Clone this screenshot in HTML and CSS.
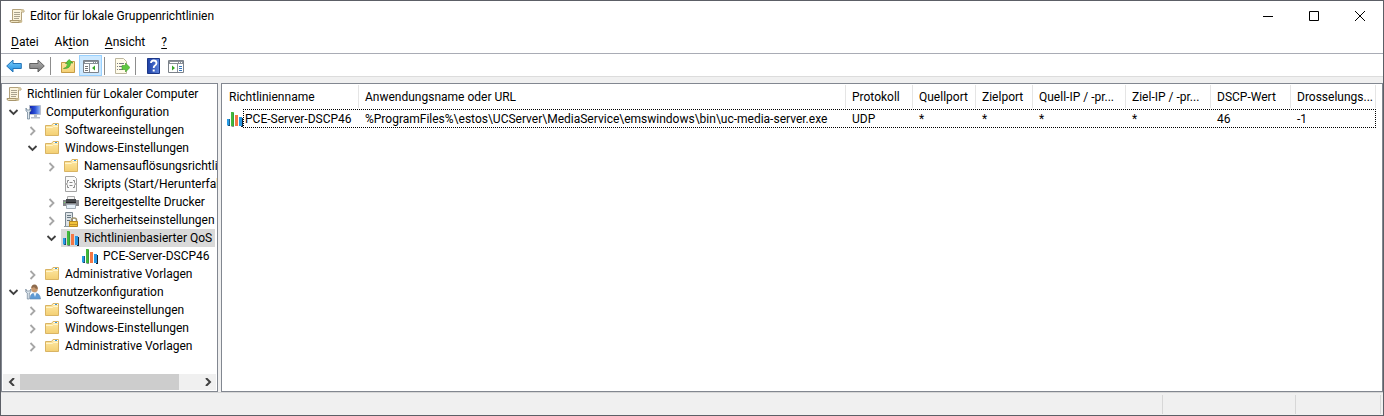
FILE: index.html
```html
<!DOCTYPE html>
<html lang="de">
<head>
  <meta charset="UTF-8">
  <title>Editor für lokale Gruppenrichtlinien</title>
  <link rel="stylesheet" href="styles.css">
</head>
<body>

<!-- icon set -->
<svg class="sprite" aria-hidden="true">
  <linearGradient id="gFolder" x1="0" y1="0" x2="0" y2="1"><stop offset="0" stop-color="#ffe9a6"/><stop offset="1" stop-color="#f3cf72"/></linearGradient>
  <linearGradient id="gBlue" x1="0" y1="0" x2="0" y2="1"><stop offset="0" stop-color="#7fd0fb"/><stop offset="1" stop-color="#1c8be0"/></linearGradient>
  <linearGradient id="gGray" x1="0" y1="0" x2="0" y2="1"><stop offset="0" stop-color="#b5b5b5"/><stop offset="1" stop-color="#757575"/></linearGradient>
  <linearGradient id="gHelp" x1="0" y1="0" x2="1" y2="0"><stop offset="0" stop-color="#1d3fa6"/><stop offset="1" stop-color="#5c83dc"/></linearGradient>
  <linearGradient id="gScreen" x1="0" y1="0" x2="1" y2="0"><stop offset="0" stop-color="#0f1fa8"/><stop offset=".5" stop-color="#2a50d8"/><stop offset="1" stop-color="#9cc0f8"/></linearGradient>
  <symbol id="scroll" viewBox="0 0 16 16">
    <path d="M3.500 1.500h10q1.500 0 1.500 1.500v1h-2.500v8.500h-9z" fill="#fbf3dc" stroke="#b3a27c"/>
    <path d="M12 1.500h1.500q1.500 0 1.500 2h-3z" fill="#d8c9a0"/>
    <path d="M1 12.500h9q0 2 1 2H2.500Q1 14.500 1 12.500z" fill="#efe3c0" stroke="#a8966d"/>
    <path d="M10 12.500h3.500q0 2.500-2 2.500T10 12.500z" fill="#cbbb91"/>
    <path d="M5 4.500h6M5 6.500h6M5 8.500h6M5 10.500h5" stroke="#a9a28e"/>
  </symbol>
  <symbol id="folder" viewBox="0 0 16 16">
    <path d="M1.500 3.500h6l1.500-2h5.500v12h-13z" fill="url(#gFolder)" stroke="#d9b464"/>
    <path d="M9.500 2.500h4.500" stroke="#fff"/>
    <path d="M11 2.500h2" stroke="#3e97d8"/>
    <path d="M2 5.500h6.500l1-1h4.500" stroke="#fff4cb" fill="none"/>
  </symbol>
  <symbol id="computer" viewBox="0 0 16 16">
    <path d="M4.500 1.500h11v9h-11z" fill="url(#gScreen)" stroke="#b9bfcc"/>
    <path d="M9 11h3v2H9zM6 13h9v1.500H6z" fill="#b9bfc8"/>
    <path d="M1 4v3l1.500 1v7h2V8L6 7V4L5 6H2z" fill="#dfe8ef" stroke="#63798c" stroke-width=".7"/>
  </symbol>
  <symbol id="user" viewBox="0 0 16 16">
    <path d="M5 15q0-6 5-6t5.500 6z" fill="#5f9bd5" stroke="#5b87b3" stroke-width=".6"/>
    <path d="M8.500 9h3l-1.500 4z" fill="#e9f2fa"/>
    <circle cx="9.500" cy="5" r="3.300" fill="#c99a70"/>
    <path d="M6.300 4q0-3.500 3.200-3.500T12.700 5q-2.700 0-3.700-2-1 1-2.700 1z" fill="#8d6a4c"/>
    <path d="M.8 5v3l1.500 1v6h2V9l1.500-1V5l-1 2h-3z" fill="#dfe8ef" stroke="#6f8295" stroke-width=".7"/>
  </symbol>
  <symbol id="script" viewBox="0 0 16 16">
    <path d="M2.500.5h9l2 2v13h-11z" fill="#fafafa" stroke="#a3a3a3"/>
    <path d="M6 4.500H4.500v2L3.500 8l1 1.500v2H6M10 4.500h1.500v2l1 1.500-1 1.500v2H10M6.500 6.500h3M6.500 9.500h3" fill="none" stroke="#8a8a8a"/>
  </symbol>
  <symbol id="printer" viewBox="0 0 16 16">
    <path d="M4.500 2.500h7v4h-7z" fill="#f5f5f5" stroke="#aaa"/>
    <path d="M0 6h3V5h10v1h3v6H0z" fill="#85878b"/>
    <path d="M3 5h10v3H3z" fill="#45484c"/>
    <path d="M3 8h10v1H3z" fill="#25272a"/>
    <path d="M3.500 10.500h9v4h-9z" fill="#e6f0f8" stroke="#a3adb6"/>
    <path d="M1 8.500h1" stroke="#6fdc64"/>
  </symbol>
  <symbol id="security" viewBox="0 0 16 16">
    <path d="M2.500.5h7v14h-7z" fill="#dce2e6" stroke="#7a8790"/>
    <path d="M4 3.500h4M4 5.500h4M4 8.500h3" stroke="#687983"/>
    <path d="M1 14.500h9" stroke="#8b999f"/>
    <path d="M8.500 10V8q0-2 2.500-2t2.500 2v2" fill="none" stroke="#a09470" stroke-width="1.500"/>
    <path d="M6.500 9.500h8v5h-8z" fill="#f1c33b" stroke="#b98a20"/>
    <path d="M7 12.500h7" stroke="#c4942a"/>
  </symbol>
  <symbol id="bars" viewBox="0 0 16 16">
    <path d="M2 8h1v7H1v-1h1zM6 2h1v13.500H4.500V14H6zM10 5h1v10H9v-1h1zM15 7h1v9h-2v-1h1z" fill="#142334"/>
    <path d="M0 8h2.500v6.500H0z" fill="#259be6"/>
    <path d="M4 1h2.800v14H4z" fill="#41b93c"/>
    <path d="M8 4h3v11H8z" fill="#f47745"/>
    <path d="M12 6h3v9h-3z" fill="#2697e4"/>
  </symbol>
  <symbol id="back" viewBox="0 0 16 16">
    <path d="M.7 8 7 2v3.500h8.300v5H7V14z" fill="url(#gBlue)" stroke="#2474b7"/>
  </symbol>
  <symbol id="forward" viewBox="0 0 16 16">
    <path d="M15.300 8 9 2v3.500H.7v5H9V14z" fill="url(#gGray)" stroke="#626262"/>
  </symbol>
  <symbol id="up" viewBox="0 0 16 16">
    <path d="M1.500 4.500h5l1-1h7v11h-13z" fill="url(#gFolder)" stroke="#c59b45"/>
    <path d="M3.500 10.500q4-.5 4-5H5.500l3.500-4 4 3.500h-2.500q0 6-7 5.500z" fill="#55c83a" stroke="#349325" stroke-width=".6"/>
  </symbol>
  <symbol id="tree-pane" viewBox="0 0 16 16">
    <path d="M.5 2.500h15v12H.5z" fill="#fff" stroke="#7c828a"/>
    <path d="M1 3h14v3H1z" fill="#8a9098"/>
    <path d="M2 4.500h8M11 4.500h1M13 4.500h1" stroke="#fff"/>
    <path d="M6.500 6v8" stroke="#8a9098"/>
    <path d="M2 8.500h3M2 10.500h3M2 12.500h3" stroke="#777"/>
    <path d="M12 7.500v5L9 10z" fill="#36a526"/>
  </symbol>
  <symbol id="export" viewBox="0 0 16 16">
    <path d="M1.500.5h8l3 3v12h-11z" fill="#fffbe9" stroke="#bcb69e"/>
    <path d="M3 5.500h1M5 5.500h5M3 8.500h1M5 8.500h4M3 11.500h1M5 11.500h4" stroke="#777b82"/>
    <path d="M8 7.500h3.500V5l4.500 4.500-4.500 4.500v-2.500H8z" fill="#5dc83f" stroke="#439a2c" stroke-width=".6"/>
  </symbol>
  <symbol id="help" viewBox="0 0 16 16">
    <path d="M2.500.5h12v15h-12z" fill="url(#gHelp)" stroke="#1c3787"/>
    <path d="M6 5q0-2.500 2.700-2.500T11.500 5q0 1.500-1.500 2.500Q8.700 8.300 8.700 10" fill="none" stroke="#fff" stroke-width="1.800"/>
    <path d="M7.700 11.500h2v2h-2z" fill="#fff"/>
  </symbol>
  <symbol id="action-pane" viewBox="0 0 16 16">
    <path d="M.5 2.500h15v12H.5z" fill="#fff" stroke="#7c828a"/>
    <path d="M1 3h14v3H1z" fill="#8a9098"/>
    <path d="M2 4.500h8M11 4.500h1M13 4.500h1" stroke="#fff"/>
    <path d="M9.500 6v8" stroke="#8a9098"/>
    <path d="M11 8.500h3M11 10.500h3M11 12.500h3" stroke="#3978bd"/>
    <path d="M4 7.500v5L7 10z" fill="#36a526"/>
  </symbol>
  <symbol id="closed" viewBox="0 0 16 16">
    <path d="m6.500 6 4 4-4 4" fill="none" stroke="#a6a6a6" stroke-width="1.800"/>
  </symbol>
  <symbol id="open" viewBox="0 0 16 16">
    <path d="m4.500 7 4 4 4-4" fill="none" stroke="#404040" stroke-width="1.800"/>
  </symbol>
</svg>

<div class="window">
  <header class="titlebar">
    <svg class="icon"><use href="#scroll"/></svg>
    <span class="title">Editor für lokale Gruppenrichtlinien</span>
    <button class="win-btn" aria-label="Minimieren"><svg width="10" height="10"><path d="M0 5.500h10" stroke="#000"/></svg></button>
    <button class="win-btn" aria-label="Maximieren"><svg width="10" height="10"><path d="M.5.5h9v9h-9z" fill="none" stroke="#000"/></svg></button>
    <button class="win-btn" aria-label="Schließen"><svg width="10" height="10"><path d="m0 0 10 10M10 0 0 10" stroke="#000"/></svg></button>
  </header>

  <nav class="menubar">
    <button><u>D</u>atei</button>
    <button>Ak<u>t</u>ion</button>
    <button><u>A</u>nsicht</button>
    <button><u>?</u></button>
  </nav>

  <div class="toolbar">
    <button aria-label="Zurück"><svg class="icon"><use href="#back"/></svg></button>
    <button aria-label="Vorwärts"><svg class="icon"><use href="#forward"/></svg></button>
    <span class="sep"></span>
    <button aria-label="Eine Ebene nach oben"><svg class="icon"><use href="#up"/></svg></button>
    <button class="active" aria-label="Konsolenstruktur"><svg class="icon"><use href="#tree-pane"/></svg></button>
    <span class="sep"></span>
    <button aria-label="Liste exportieren"><svg class="icon"><use href="#export"/></svg></button>
    <span class="sep"></span>
    <button aria-label="Hilfe"><svg class="icon"><use href="#help"/></svg></button>
    <button aria-label="Aktionsbereich"><svg class="icon"><use href="#action-pane"/></svg></button>
  </div>

  <main class="panes">
    <aside class="tree-pane">
      <div class="tree">
        <div class="node root"><span class="label"><svg class="icon"><use href="#scroll"/></svg>Richtlinien für Lokaler Computer</span></div>
        <ul>
          <li>
            <div class="node"><button class="toggle" aria-label="Reduzieren"><svg class="icon"><use href="#open"/></svg></button><span class="label"><svg class="icon"><use href="#computer"/></svg>Computerkonfiguration</span></div>
            <ul>
              <li><div class="node"><button class="toggle" aria-label="Erweitern"><svg class="icon"><use href="#closed"/></svg></button><span class="label"><svg class="icon"><use href="#folder"/></svg>Softwareeinstellungen</span></div></li>
              <li>
                <div class="node"><button class="toggle" aria-label="Reduzieren"><svg class="icon"><use href="#open"/></svg></button><span class="label"><svg class="icon"><use href="#folder"/></svg>Windows-Einstellungen</span></div>
                <ul>
                  <li><div class="node"><button class="toggle" aria-label="Erweitern"><svg class="icon"><use href="#closed"/></svg></button><span class="label"><svg class="icon"><use href="#folder"/></svg>Namensauflösungsrichtli</span></div></li>
                  <li><div class="node"><span class="toggle"></span><span class="label"><svg class="icon"><use href="#script"/></svg>Skripts (Start/Herunterfah</span></div></li>
                  <li><div class="node"><button class="toggle" aria-label="Erweitern"><svg class="icon"><use href="#closed"/></svg></button><span class="label"><svg class="icon"><use href="#printer"/></svg>Bereitgestellte Drucker</span></div></li>
                  <li><div class="node"><button class="toggle" aria-label="Erweitern"><svg class="icon"><use href="#closed"/></svg></button><span class="label"><svg class="icon"><use href="#security"/></svg>Sicherheitseinstellungen</span></div></li>
                  <li>
                    <div class="node"><button class="toggle" aria-label="Reduzieren"><svg class="icon"><use href="#open"/></svg></button><span class="label selected"><svg class="icon"><use href="#bars"/></svg>Richtlinienbasierter QoS</span></div>
                    <ul>
                      <li><div class="node"><span class="toggle"></span><span class="label"><svg class="icon"><use href="#bars"/></svg>PCE-Server-DSCP46</span></div></li>
                    </ul>
                  </li>
                </ul>
              </li>
              <li><div class="node"><button class="toggle" aria-label="Erweitern"><svg class="icon"><use href="#closed"/></svg></button><span class="label"><svg class="icon"><use href="#folder"/></svg>Administrative Vorlagen</span></div></li>
            </ul>
          </li>
          <li>
            <div class="node"><button class="toggle" aria-label="Reduzieren"><svg class="icon"><use href="#open"/></svg></button><span class="label"><svg class="icon"><use href="#user"/></svg>Benutzerkonfiguration</span></div>
            <ul>
              <li><div class="node"><button class="toggle" aria-label="Erweitern"><svg class="icon"><use href="#closed"/></svg></button><span class="label"><svg class="icon"><use href="#folder"/></svg>Softwareeinstellungen</span></div></li>
              <li><div class="node"><button class="toggle" aria-label="Erweitern"><svg class="icon"><use href="#closed"/></svg></button><span class="label"><svg class="icon"><use href="#folder"/></svg>Windows-Einstellungen</span></div></li>
              <li><div class="node"><button class="toggle" aria-label="Erweitern"><svg class="icon"><use href="#closed"/></svg></button><span class="label"><svg class="icon"><use href="#folder"/></svg>Administrative Vorlagen</span></div></li>
            </ul>
          </li>
        </ul>
      </div>
      <div class="scrollbar">
        <button aria-label="Nach links"><svg width="8" height="8"><path d="M6 0 2 4l4 4" fill="none" stroke="#404040" stroke-width="2"/></svg></button>
        <div class="track"><div class="thumb"></div></div>
        <button aria-label="Nach rechts"><svg width="8" height="8"><path d="m2 0 4 4-4 4" fill="none" stroke="#404040" stroke-width="2"/></svg></button>
      </div>
    </aside>

    <section class="list-pane">
      <table class="list">
        <colgroup>
          <col class="c-name"><col class="c-app"><col class="c-proto"><col class="c-sport"><col class="c-dport"><col class="c-sip"><col class="c-dip"><col class="c-dscp"><col class="c-rate">
        </colgroup>
        <thead>
          <tr>
            <th>Richtlinienname</th>
            <th>Anwendungsname oder URL</th>
            <th>Protokoll</th>
            <th>Quellport</th>
            <th>Zielport</th>
            <th>Quell-IP / -pr...</th>
            <th>Ziel-IP / -pr...</th>
            <th>DSCP-Wert</th>
            <th>Drosselungs...</th>
          </tr>
        </thead>
        <tbody>
          <tr>
            <td><span class="name"><svg class="icon"><use href="#bars"/></svg>PCE-Server-DSCP46</span></td>
            <td>%ProgramFiles%\estos\UCServer\MediaService\emswindows\bin\uc-media-server.exe</td>
            <td>UDP</td>
            <td>*</td>
            <td>*</td>
            <td>*</td>
            <td>*</td>
            <td>46</td>
            <td>-1</td>
          </tr>
        </tbody>
      </table>
    </section>
  </main>

  <footer class="statusbar">
    <div class="cell grow"></div>
    <div class="cell medium"></div>
    <div class="cell small"></div>
  </footer>
</div>

</body>
</html>
```
FILE: styles.css
```css
* { box-sizing: border-box; }
body {
  margin: 0;
  font-family: Roboto, "Open Sans", sans-serif;
  font-size: 12px;
  line-height: 18px;
  color: #000;
}
button {
  font: inherit;
  color: inherit;
  background: none;
  border: none;
  padding: 0;
}
.sprite {
  position: absolute;
  width: 0;
  height: 0;
}
.icon {
  width: 16px;
  height: 16px;
  flex: none;
}
.window {
  display: flex;
  flex-direction: column;
  min-height: 100vh;
  border: 1px solid #5c5f66;
  background-color: #f0f0f0;
}

/* title and menu */
.titlebar {
  display: flex;
  align-items: center;
  height: 29px;
  padding-left: 8px;
  background-color: #fff;
}
.title {
  flex: 1;
  padding-left: 5px;
}
.win-btn {
  width: 46px;
  height: 29px;
  display: flex;
  align-items: center;
  justify-content: center;
}
.menubar {
  display: flex;
  gap: 16px;
  height: 24px;
  padding: 1px 10px 0;
  border-bottom: 1px solid #a9acb5;
  background-color: #fff;
}
.menubar u {
  text-underline-offset: 2px;
}

/* toolbar */
.toolbar {
  display: flex;
  align-items: center;
  height: 23px;
  padding: 1px 0 0 1px;
  border-bottom: 1px solid #dcdcdc;
  background-color: #fff;
}
.toolbar button {
  display: flex;
  align-items: center;
  justify-content: center;
  width: 23px;
  height: 21px;
}
.toolbar .active {
  background-color: #cce8ff;
  border: 1px solid #99d1ff;
}
.sep {
  width: 1px;
  height: 18px;
  margin: 0 5px 0 2px;
  background-color: #8d8d8d;
}

/* panes */
.panes {
  flex: 1;
  display: flex;
  gap: 3px;
  padding-top: 6px;
}
.tree-pane {
  display: flex;
  flex-direction: column;
  width: 217px;
  border: 1px solid #828790;
  background-color: #fff;
}
.tree {
  flex: 1;
  overflow: hidden;
  padding: 1px 0 0 2px;
}
.tree ul {
  list-style: none;
  margin: 0;
  padding: 0;
}
.tree ul ul {
  padding-left: 19px;
}
.node {
  display: flex;
  height: 18px;
  white-space: nowrap;
}
.toggle {
  width: 16px;
  height: 18px;
  margin: 0 2px 0 1px;
  flex: none;
}
.label {
  display: flex;
  align-items: center;
  gap: 5px;
  padding: 0 3px 0 2px;
}
.selected {
  background-color: #d9d9d9;
}
.scrollbar {
  display: flex;
  height: 17px;
  margin: 0 1px;
  border-bottom: 1px solid #fff;
  background-color: #f0f0f0;
}
.scrollbar button {
  display: flex;
  align-items: center;
  justify-content: center;
  width: 17px;
}
.track {
  flex: 1;
}
.thumb {
  width: 89%;
  height: 100%;
  background-color: #cdcdcd;
}

/* list */
.list-pane {
  flex: 1;
  min-width: 0;
  overflow: hidden;
  border: 1px solid #828790;
  background-color: #fff;
}
.list {
  table-layout: fixed;
  width: 1154px;
  border-collapse: separate;
  border-spacing: 0;
}
.c-name { width: 137px; }
.c-app { width: 487px; }
.c-proto { width: 67px; }
.c-sport { width: 63px; }
.c-dport { width: 57px; }
.c-sip { width: 93px; }
.c-dip { width: 85px; }
.c-dscp { width: 80px; }
.c-rate { width: 85px; }
.list th,
.list td {
  padding: 0 0 0 6px;
  text-align: left;
  font-weight: normal;
  white-space: nowrap;
}
.list th {
  height: 25px;
  background: linear-gradient(#e5e5e5, #e5e5e5) right 1px / 1px 23px no-repeat;
}
.list td {
  height: 19px;
}
.list th:first-child {
  padding-left: 7px;
}
.list td:first-child {
  padding-left: 5px;
}
.name {
  display: flex;
  align-items: center;
  gap: 2px;
}
.list tbody tr {
  position: relative;
}
.list tbody tr::after {
  content: "";
  position: absolute;
  inset: 0 0 0 21px;
  border: 1px dotted #000;
}

/* status bar */
.statusbar {
  display: flex;
  height: 23px;
  padding: 2px 2px 1px 0;
  border-top: 1px solid #d7d7d7;
}
.cell {
  border-right: 1px solid #d7d7d7;
}
.grow { flex: 1; }
.medium { width: 133px; }
.small { width: 85px; }
```
